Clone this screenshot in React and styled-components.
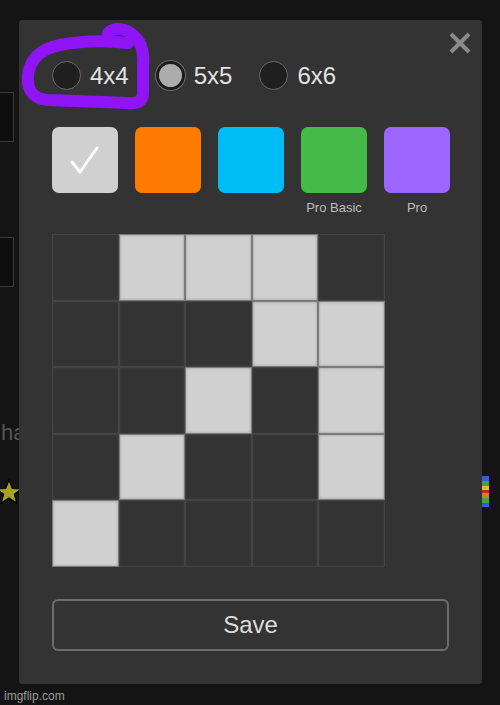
import React from "react";
import styled, { createGlobalStyle } from "styled-components";

const GlobalStyle = createGlobalStyle`
  html, body {
    margin: 0;
    padding: 0;
    background: #141414;
    font-family: "Liberation Sans", Arial, sans-serif;
  }
`;

const SWATCHES = [
  { color: "#d0d0d0", selected: true },
  { color: "#ff7b00" },
  { color: "#00bef5" },
  { color: "#45ba49", label: "Pro Basic" },
  { color: "#9d66ff", label: "Pro" },
];

const PATTERN = [
  [0, 1, 1, 1, 0],
  [0, 0, 0, 1, 1],
  [0, 0, 1, 0, 1],
  [0, 1, 0, 0, 1],
  [1, 0, 0, 0, 0],
];

const SIZES = ["4x4", "5x5", "6x6"];

function App() {
  return (
    <>
      <GlobalStyle />
      <Page>
        <BgBox $top={92} />
        <BgBox $top={237} />
        <BgText>ha</BgText>
        <Star viewBox="0 0 24 24">
          <path
            d="M12 2 L14.9 9 L22.5 9.3 L16.6 14 L18.7 21.5 L12 17.2 L5.3 21.5 L7.4 14 L1.5 9.3 L9.1 9 Z"
            fill="#aaa225"
            stroke="#000"
            strokeWidth="1"
          />
        </Star>
        <Rainbow />

        <Modal>
          <Close viewBox="0 0 24 24">
            <path d="M3 3 L21 21 M21 3 L3 21" stroke="#8a8a8a" strokeWidth="4" />
          </Close>

          <RadioRow>
            {SIZES.map((s) => (
              <RadioLabel key={s}>
                <Radio $checked={s === "5x5"} />
                {s}
              </RadioLabel>
            ))}
          </RadioRow>

          <SwatchRow>
            {SWATCHES.map((sw, i) => (
              <SwatchItem key={i}>
                <Swatch $color={sw.color}>
                  {sw.selected && (
                    <svg width="34" height="30" viewBox="0 0 34 30">
                      <path
                        d="M4 17 L12 27 L29 3"
                        fill="none"
                        stroke="#fff"
                        strokeWidth="3"
                        strokeLinecap="round"
                        strokeLinejoin="round"
                      />
                    </svg>
                  )}
                </Swatch>
                <SwatchLabel>{sw.label || ""}</SwatchLabel>
              </SwatchItem>
            ))}
          </SwatchRow>

          <Grid>
            {PATTERN.flat().map((on, i) => (
              <Cell key={i} $on={on === 1} />
            ))}
          </Grid>

          <SaveButton>Save</SaveButton>
        </Modal>

        <Scribble viewBox="0 0 160 120">
          <path
            d="M108 33 C114 27 126 28 133 35 C142 42 144 54 143 66 L143 93 C143 101 138 104 128 103 L48 100 C33 99 27 90 28 76 C29 60 40 49 60 45 C80 41 104 40 128 43"
            fill="none"
            stroke="#8f15f7"
            strokeWidth="12"
            strokeLinecap="round"
            strokeLinejoin="round"
          />
        </Scribble>

        <Watermark>imgflip.com</Watermark>
      </Page>
    </>
  );
}

export default App;

const Page = styled.div`
  position: relative;
  width: 500px;
  height: 705px;
  overflow: hidden;
  background: #141414;
`;

const BgBox = styled.div`
  position: absolute;
  left: -10px;
  top: ${(p) => p.$top}px;
  width: 22px;
  height: 48px;
  border: 1px solid #3a3a3a;
  background: #0e0e0e;
`;

const BgText = styled.span`
  position: absolute;
  left: 1px;
  top: 420px;
  font-size: 22px;
  color: #555;
`;

const Star = styled.svg`
  position: absolute;
  left: -5px;
  top: 478px;
  width: 28px;
  height: 28px;
`;

const Rainbow = styled.div`
  position: absolute;
  left: 482px;
  top: 476px;
  width: 7px;
  height: 31px;
  background: linear-gradient(
    #3a5bd0 0 16%,
    #3aa848 16% 32%,
    #d8c31e 32% 44%,
    #c0282b 44% 56%,
    #e07a1f 56% 72%,
    #3aa848 72% 86%,
    #3a5bd0 86%
  );
`;

const Modal = styled.div`
  position: absolute;
  left: 19px;
  top: 20px;
  width: 463px;
  height: 664px;
  box-sizing: border-box;
  padding: 41px 33px 0 33px;
  background: #333333;
  border-radius: 3px;
  display: flex;
  flex-direction: column;
`;

const Close = styled.svg`
  position: absolute;
  top: 11px;
  right: 10px;
  width: 24px;
  height: 24px;
`;

const RadioRow = styled.div`
  display: flex;
  align-items: center;
  gap: 27px;
  height: 29px;
`;

const RadioLabel = styled.label`
  display: flex;
  align-items: center;
  gap: 9px;
  font-size: 24px;
  color: #e2e2e2;
`;

const Radio = styled.span`
  width: 29px;
  height: 29px;
  box-sizing: border-box;
  border-radius: 50%;
  border: ${(p) => (p.$checked ? "3px solid #1c1c1c" : "1.5px solid #6a6a6a")};
  background: ${(p) => (p.$checked ? "#acacac" : "#1f1f1f")};
  box-shadow: ${(p) => (p.$checked ? "0 0 0 1px #6a6a6a" : "none")};
`;

const SwatchRow = styled.div`
  display: flex;
  gap: 17px;
  margin-top: 37px;
`;

const SwatchItem = styled.div`
  display: flex;
  flex-direction: column;
  align-items: center;
  width: 66px;
`;

const Swatch = styled.div`
  width: 66px;
  height: 66px;
  border-radius: 7px;
  background: ${(p) => p.$color};
  display: flex;
  align-items: center;
  justify-content: center;
`;

const SwatchLabel = styled.span`
  height: 15px;
  margin-top: 7px;
  font-size: 13px;
  color: #bdbdbd;
  white-space: nowrap;
`;

const Grid = styled.div`
  margin-top: 19px;
  width: 333px;
  height: 333px;
  display: grid;
  grid-template-columns: repeat(5, 1fr);
  grid-template-rows: repeat(5, 1fr);
`;

const Cell = styled.div`
  background: ${(p) => (p.$on ? "#d0d0d0" : "#333333")};
  box-shadow: inset 0 0 0 1px ${(p) => (p.$on ? "#7a7a7a" : "#444")},
    inset 0 0 3px 1px ${(p) => (p.$on ? "#9a9a9a" : "#3d3d3d")};
`;

const SaveButton = styled.button`
  margin-top: 32px;
  width: 397px;
  height: 52px;
  box-sizing: border-box;
  border: 2px solid #6c6c6c;
  border-radius: 6px;
  background: transparent;
  color: #dcdcdc;
  font-family: "Liberation Sans", Arial, sans-serif;
  font-size: 24px;
`;

const Scribble = styled.svg`
  position: absolute;
  left: 0;
  top: 0;
  width: 160px;
  height: 120px;
`;

const Watermark = styled.span`
  position: absolute;
  left: 4px;
  bottom: 2px;
  font-size: 12px;
  color: #9a9a9a;
`;
